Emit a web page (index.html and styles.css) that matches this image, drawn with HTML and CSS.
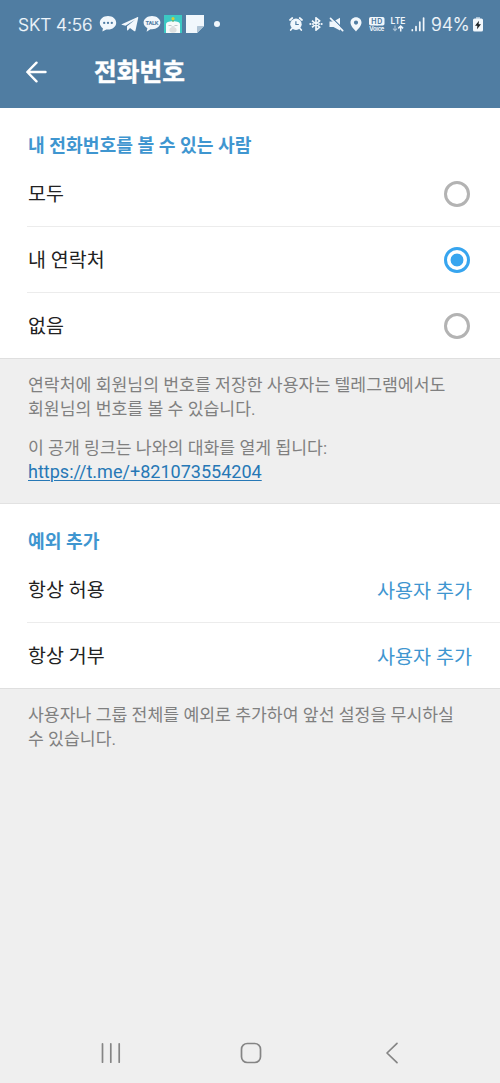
FILE: index.html
```html
<!DOCTYPE html>
<html lang="ko">
	<head>
		<meta charset="utf-8">
		<meta name="viewport" content="width=device-width, initial-scale=1">
		<title>전화번호</title>
		<link rel="stylesheet" href="styles.css">
	</head>
	<body>
		<header class="top">
			<div class="status">
				<div class="status-left">
					<span class="clock">SKT 4:56</span>
					<svg width="18" height="18" viewBox="0 0 18 18"><path fill="#f1f7fc" d="M9 1C4.300 1 .8 3.900 .8 7.800c0 2.300 1.200 4.200 3.100 5.400L3.400 16.600 7.300 14.500c.6.1 1.100.1 1.700.1 4.700 0 8.200-2.900 8.200-6.800S13.700 1 9 1z"/><g fill="#4f7ca3"><circle cx="5.200" cy="7.900" r="1.150"/><circle cx="9" cy="7.900" r="1.150"/><circle cx="12.800" cy="7.900" r="1.150"/></g></svg>
					<svg width="18" height="18" viewBox="0 0 18 18"><path fill="#f1f7fc" d="M.7 9.200 16.200 2.200c.7-.3 1.200.1 1 .9L14.500 15.400c-.2.9-.8 1.100-1.500.6L9 13.100 7 15.200c-.5.500-1 .3-1-.4v-3.500l8-6.500-9.500 6-3.700-1c-.5-.2-.5-.4-.1-.6z"/></svg>
					<svg width="18" height="18" viewBox="0 0 18 18"><path fill="#f1f7fc" d="M9 1C4.300 1 .6 3.900 .6 7.600c0 2.400 1.500 4.400 3.800 5.600L3.600 16.700 7.400 14.200c.5.1 1 .1 1.600.1 4.700 0 8.400-3 8.400-6.700S13.700 1 9 1z"/><text class="talk" x="9" y="10" text-anchor="middle" textLength="13">TALK</text></svg>
					<svg width="18" height="18" viewBox="0 0 18 18"><path fill="#3cc9c3" d="M0 0h18v18H0z"/><path fill="#f7fbfa" d="M2 18V9.500C2 7.500 4.500 6.300 9 6.300s7 1.200 7 3.200V18z"/><path fill="#58a653" d="M8.500 3h1v4h-1z"/><circle cx="9" cy="3.700" r="1.600" fill="#d9cf35"/><path fill="none" stroke="#a9b6b8" stroke-width=".7" d="M4.500 10.500h3M10.500 10.500h3M7.500 12h3"/><ellipse cx="9" cy="15" rx="3.600" ry="2.700" fill="#dddfdf"/></svg>
					<svg width="18" height="18" viewBox="0 0 18 18"><path fill="#f1f7fc" d="M0 0h18v11l-7 7H0z"/><path fill="#aec3d5" d="M11 18v-6.500q0-.5.500-.5H18z"/></svg>
					<i class="dot"></i>
				</div>
				<div class="status-right">
					<svg class="alarm" width="14" height="14" viewBox="0 0 14 14"><path fill="none" stroke="#f1f7fc" stroke-width="1.700" stroke-linecap="round" d="M1 3 3.300 1M13 3 10.700 1M3 11.500 1.700 13M11 11.500l1.300 1.500"/><circle cx="7" cy="7.200" r="5.700" fill="#f1f7fc"/><path fill="none" stroke="#4f7ca3" stroke-width="1.200" d="M6.900 4.200v3.300h2.900"/></svg>
					<svg class="bt" width="14" height="14" viewBox="0 0 14 14"><path fill="none" stroke="#f1f7fc" stroke-width="1.700" stroke-linejoin="round" d="M3 3.700 10.700 10.200 7 13.200V.8l3.700 3L3 10.300"/><g fill="#f1f7fc"><circle cx="1.400" cy="7" r="1.100"/><circle cx="4" cy="7" r="1.100"/><circle cx="10" cy="7" r="1.100"/><circle cx="12.600" cy="7" r="1.100"/></g></svg>
					<svg class="mute" width="15" height="15" viewBox="0 0 15 15"><path fill="#f1f7fc" d="M.5 4.500h4L11 .8v12.700L4.500 9.900h-4z"/><path stroke="#4f7ca3" stroke-width="1.100" d="M2.500.3 15 12.800"/><path stroke="#f1f7fc" stroke-width="1.700" stroke-linecap="round" d="M1.500 1.400 13.700 13.600"/></svg>
					<svg class="pin" width="12" height="15" viewBox="0 0 12 15"><path fill="#f1f7fc" fill-rule="evenodd" d="M6 .3C2.800.3.5 2.600.5 5.600.5 9.300 4 12 6 14.500 8 12 11.500 9.300 11.500 5.600 11.500 2.600 9.200.3 6 .3zm0 3.200a2.100 2.100 0 1 1 0 4.200 2.100 2.100 0 0 1 0-4.200z"/></svg>
					<svg class="hd" width="16" height="15" viewBox="0 0 16 15"><rect width="15.500" height="8.500" rx="1.800" fill="#f1f7fc"/><text class="hd-text" x="7.700" y="7" text-anchor="middle" textLength="11">HD</text><text class="voice" x="7.800" y="14" text-anchor="middle" textLength="15">Voice</text></svg>
					<svg class="lte" width="18" height="20" viewBox="-1 -3 18 20"><text class="lte-text" x="8" y="6.500" text-anchor="middle" textLength="15">LTE</text><path fill="none" stroke="#a9c0d4" stroke-width="1.100" d="M5 8.500v5M3 11.700l2 2 2-2"/><path fill="none" stroke="#f1f7fc" stroke-width="1.500" d="M10.700 14.500V9.200M8.300 11.400l2.400-2.400 2.400 2.400"/></svg>
					<svg class="signal" width="14" height="15" viewBox="0 0 14 15"><path fill="none" stroke="#f1f7fc" stroke-width="1.700" stroke-linecap="round" d="M1.300 12.800v.7M5 9.500v4M8.800 5v8.500M12.600 1v12.500"/></svg>
					<span class="percent">94%</span>
					<svg class="battery" width="10" height="15" viewBox="0 0 10 15"><path fill="#a9c0d4" d="M3 0h4v2H3z"/><rect y="1.500" width="10" height="13" rx="1.600" fill="#f1f7fc"/><path fill="#1c2226" d="M6 3.700 2 8.700h2.400L4 12.300l4-5H5.600z"/></svg>
				</div>
			</div>
			<div class="bar">
				<svg class="back" width="22" height="22" viewBox="0 0 22 22"><path fill="none" stroke="#fff" stroke-width="2.400" stroke-linecap="round" stroke-linejoin="round" d="M19.500 11H1.500M10.500 1.700 1.300 11l9.200 9.300"/></svg>
				<h1>전화번호</h1>
			</div>
		</header>

		<section class="card">
			<h2>내 전화번호를 볼 수 있는 사람</h2>
			<ul>
				<li><span>모두</span><i class="radio"></i></li>
				<li><span>내 연락처</span><i class="radio checked"></i></li>
				<li><span>없음</span><i class="radio"></i></li>
			</ul>
		</section>
		<div class="info link-info">
			<p>연락처에 회원님의 번호를 저장한 사용자는 텔레그램에서도<br>회원님의 번호를 볼 수 있습니다.</p>
			<p>이 공개 링크는 나와의 대화를 열게 됩니다:<br><a href="https://t.me/+821073554204">https://t.me/+821073554204</a></p>
		</div>

		<section class="card">
			<h2>예외 추가</h2>
			<ul>
				<li><span>항상 허용</span><span class="add">사용자 추가</span></li>
				<li><span>항상 거부</span><span class="add">사용자 추가</span></li>
			</ul>
		</section>
		<div class="info">
			<p>사용자나 그룹 전체를 예외로 추가하여 앞선 설정을 무시하실<br>수 있습니다.</p>
		</div>

		<nav>
			<svg width="20" height="22" viewBox="0 0 20 22"><path stroke="#858585" stroke-width="1.700" stroke-linecap="round" d="M1.500 1.800v18.400M9.800 1.800v18.400M18.200 1.800v18.400"/></svg>
			<svg width="22" height="22" viewBox="0 0 22 22"><rect x="1.500" y="1.500" width="19" height="19" rx="5.800" fill="none" stroke="#858585" stroke-width="1.700"/></svg>
			<svg width="14" height="22" viewBox="0 0 14 22"><path fill="none" stroke="#858585" stroke-width="1.700" stroke-linecap="round" stroke-linejoin="round" d="M12 1.300 2 11l10 9.700"/></svg>
		</nav>
	</body>
</html>
```
FILE: styles.css
```css
*{ box-sizing: border-box; margin: 0; padding: 0; }
body{
	display: flex; flex-direction: column; height: 1083px;
	background: #efefef; color: #222;
	font-family: Roboto, "Noto Sans CJK KR", sans-serif;
}
svg{ display: block; flex: none; }
ul{ list-style: none; }

/* header */
.top{ height: 108px; background: #507da2; color: #fff; }
.status{ display: flex; justify-content: space-between; height: 48px; padding: 0 17px 0 18px; color: #f1f7fc; font-family: Inter, sans-serif; font-size: 17.5px; font-weight: 300; }
.status-left,.status-right{ display: flex; align-items: center; }
.status-left svg{ margin-right: 3.8px; }
.clock{ width: 81px; letter-spacing: -.1px; white-space: nowrap; -webkit-text-stroke: .2px #f1f7fc; }
.dot{ width: 6px; height: 6px; margin-left: 6px; border-radius: 50%; background: #f1f7fc; }
.talk{ font: 700 5.8px Roboto, sans-serif; fill: #4f7ca3; }
.alarm,.bt{ margin-right: 6px; }
.mute{ margin-right: 6px; }
.pin{ margin-right: 7px; }
.hd{ margin-right: 4px; }
.hd-text{ font: 700 7px Inter, sans-serif; fill: #4f7ca3; }
.voice{ font: 700 5.8px Inter, sans-serif; fill: #f1f7fc; }
.lte{ margin-right: 4px; }
.lte-text{ font: 600 8.5px Inter, sans-serif; fill: #f1f7fc; }
.signal{ margin-right: 6px; }
.percent{ width: 42px; white-space: nowrap; font-size: 18px; letter-spacing: -.2px; -webkit-text-stroke: .2px #f1f7fc; }
.bar{ display: flex; align-items: center; height: 48px; padding-left: 26px; }
.bar h1{ margin-left: 46px; padding-top: 1px; font-size: 24.7px; line-height: 36px; font-weight: 700; -webkit-text-stroke: .4px #fff; }

/* white blocks */
.card{ background: #fff; border-bottom: 1px solid #dfdfdf; }
.card h2{ height: 53px; padding: 12px 28px 0; color: #3f96d0; font-size: 18.2px; line-height: 52px; font-weight: 700; }
.card li{ display: flex; align-items: center; justify-content: space-between; height: 66px; margin-left: 27px; padding: 0 28px 0 1px; border-bottom: 1px solid #ececec; font-size: 19.5px; }
.card li:last-child{ border-bottom: 0; height: 65px; }
.card li span{ padding-bottom: 3px; }
.radio{ width: 26px; height: 26px; margin-right: 2px; border: 3px solid #b3b3b3; border-radius: 50%; }
.checked{ border-color: #37a5ef; background: radial-gradient(circle, #37a5ef 6px, transparent 6.8px); }
.card .add{ padding-bottom: 1px; color: #3f96d0; font-size: 19.6px; }

/* gray notes */
.info{ padding: 14px 28px 0; color: #808080; font-size: 17.23px; line-height: 24px; white-space: nowrap; }
.info p + p{ margin-top: 15px; }
.link-info{ height: 145px; border-bottom: 1px solid #e2e2e2; }
.info a{ display: inline-block; margin-top: -1px; color: #2678b6; font-size: 18.05px; text-underline-offset: 2px; text-decoration-thickness: 1px; }

nav{ display: flex; justify-content: space-between; align-items: center; height: 60px; margin-top: auto; padding: 0 101px; }
nav svg:nth-child(2){ margin-right: 4px; }
```
